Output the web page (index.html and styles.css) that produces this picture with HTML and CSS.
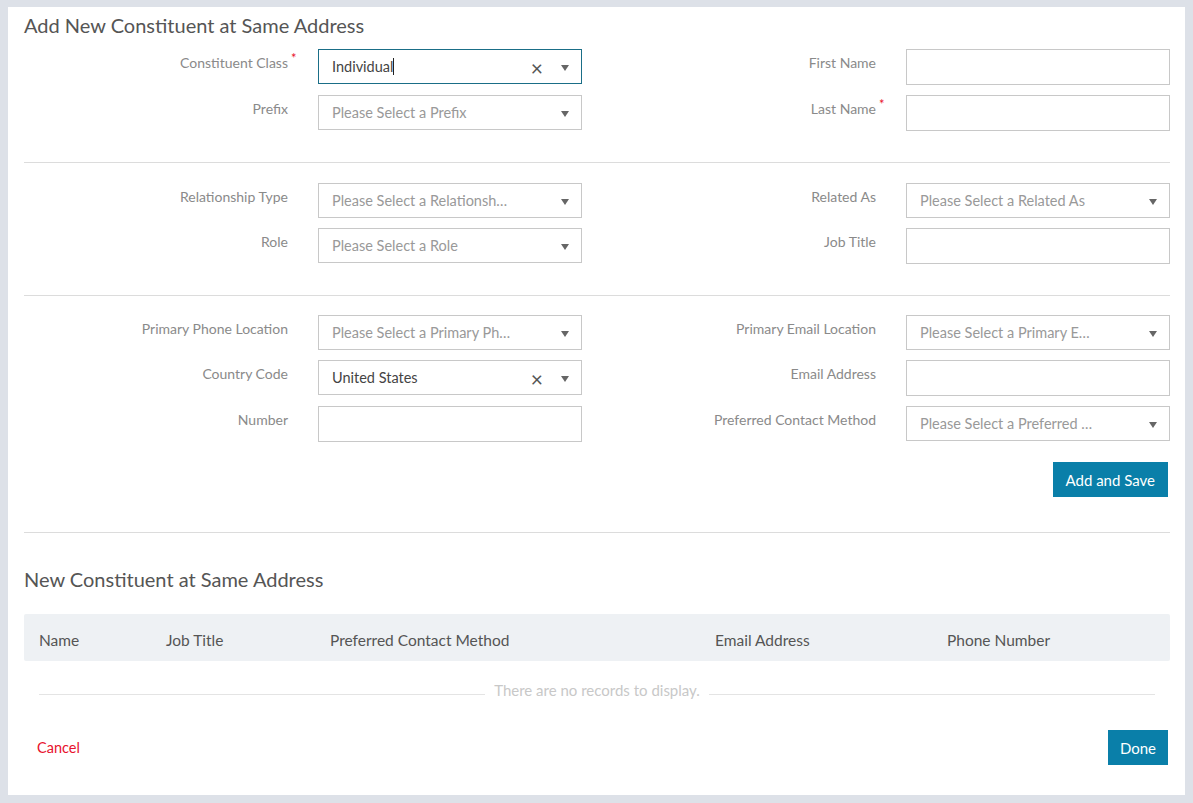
FILE: index.html
```html
<!DOCTYPE html>
<html lang="en">
<head>
    <meta charset="UTF-8">
    <title>Add New Constituent at Same Address</title>
    <link rel="stylesheet" href="styles.css">
</head>
<body>
    <div class="panel">
        <h1 class="panel-title">Add New Constituent at Same Address</h1>

        <div class="form-section">
            <label class="field-label"><span class="label-text">Constituent Class<span class="req">*</span></span></label>
            <div class="select focused">
                <span class="select-value">Individual<span class="caret"></span></span>
                <span class="clear">&times;</span>
                <span class="arrow"></span>
            </div>
            <label class="field-label"><span class="label-text">First Name</span></label>
            <div class="text-input"></div>

            <label class="field-label"><span class="label-text">Prefix</span></label>
            <div class="select">
                <span class="select-placeholder">Please Select a Prefix</span>
                <span class="arrow"></span>
            </div>
            <label class="field-label"><span class="label-text">Last Name<span class="req">*</span></span></label>
            <div class="text-input"></div>
        </div>

        <div class="form-section">
            <label class="field-label"><span class="label-text">Relationship Type</span></label>
            <div class="select">
                <span class="select-placeholder">Please Select a Relationsh…</span>
                <span class="arrow"></span>
            </div>
            <label class="field-label"><span class="label-text">Related As</span></label>
            <div class="select">
                <span class="select-placeholder">Please Select a Related As</span>
                <span class="arrow"></span>
            </div>

            <label class="field-label"><span class="label-text">Role</span></label>
            <div class="select">
                <span class="select-placeholder">Please Select a Role</span>
                <span class="arrow"></span>
            </div>
            <label class="field-label"><span class="label-text">Job Title</span></label>
            <div class="text-input"></div>
        </div>

        <div class="form-section last">
            <label class="field-label"><span class="label-text">Primary Phone Location</span></label>
            <div class="select">
                <span class="select-placeholder">Please Select a Primary Ph…</span>
                <span class="arrow"></span>
            </div>
            <label class="field-label"><span class="label-text">Primary Email Location</span></label>
            <div class="select">
                <span class="select-placeholder">Please Select a Primary E…</span>
                <span class="arrow"></span>
            </div>

            <label class="field-label"><span class="label-text">Country Code</span></label>
            <div class="select">
                <span class="select-value">United States</span>
                <span class="clear">&times;</span>
                <span class="arrow"></span>
            </div>
            <label class="field-label"><span class="label-text">Email Address</span></label>
            <div class="text-input"></div>

            <label class="field-label"><span class="label-text">Number</span></label>
            <div class="text-input"></div>
            <label class="field-label"><span class="label-text">Preferred Contact Method</span></label>
            <div class="select">
                <span class="select-placeholder">Please Select a Preferred …</span>
                <span class="arrow"></span>
            </div>
        </div>

        <div class="save-row">
            <button class="btn-primary">Add and Save</button>
        </div>

        <h2 class="section-title">New Constituent at Same Address</h2>

        <div class="records">
            <div class="records-head">
                <span class="col col-name">Name</span>
                <span class="col col-job">Job Title</span>
                <span class="col col-contact">Preferred Contact Method</span>
                <span class="col col-email">Email Address</span>
                <span class="col col-phone">Phone Number</span>
            </div>
            <div class="records-empty">
                <span class="empty-line"></span>
                <span class="empty-text">There are no records to display.</span>
                <span class="empty-line"></span>
            </div>
        </div>

        <div class="footer-row">
            <a class="cancel-link">Cancel</a>
            <button class="btn-primary btn-done">Done</button>
        </div>
    </div>
</body>
</html>
```

FILE: styles.css
```css
body {
    margin: 0;
    padding: 7px 8px 8px 8px;
    background: #dde1e8;
    font-family: Lato, "Open Sans", sans-serif;
    color: #555;
}
.panel {
    box-sizing: border-box;
    height: 788px;
    background: #fff;
    padding: 8px 15px 0 16px;
}
.panel-title {
    margin: 0;
    font-size: 20px;
    font-weight: 400;
    line-height: 20px;
    color: #555;
}
.form-section {
    display: grid;
    grid-template-columns: repeat(4, minmax(0, 1fr));
    column-gap: 30px;
    row-gap: 10px;
    padding: 14px 0 31px 0;
    border-bottom: 1px solid #dcdcdc;
}
.form-section + .form-section {
    padding-top: 20px;
}
.form-section.last {
    border-bottom: none;
    padding-top: 19px;
    padding-bottom: 0;
}
.field-label {
    text-align: right;
    font-size: 14px;
    color: #8a8a8a;
    padding-top: 5px;
    line-height: 17px;
}
.label-text {
    position: relative;
}
.req {
    position: absolute;
    left: 100%;
    top: -4px;
    margin-left: 3px;
    color: #e8112d;
    font-size: 13px;
}
.select,
.text-input {
    box-sizing: border-box;
    height: 35px;
    border: 1px solid #c8c8c8;
    background: #fff;
    display: flex;
    align-items: center;
    padding: 0 12px 0 13px;
    font-size: 14.5px;
}
.text-input {
    height: 36px;
}
.select.focused {
    border-color: #1a6e87;
}
.select-placeholder,
.select-value {
    flex: 1;
    min-width: 0;
    white-space: nowrap;
    overflow: hidden;
    color: #999;
    padding-right: 10px;
}
.select-value {
    color: #444;
}
.caret {
    display: inline-block;
    width: 1px;
    height: 17px;
    background: #222;
    vertical-align: -3px;
}
.clear {
    color: #555;
    font-size: 21px;
    line-height: 1;
    margin-right: 18px;
    margin-top: 1px;
}
.arrow {
    width: 0;
    height: 0;
    border-left: 4px solid transparent;
    border-right: 4px solid transparent;
    border-top: 6px solid #666;
    margin-top: 2px;
}
.save-row {
    display: flex;
    justify-content: flex-end;
    padding: 20px 2px 35px 0;
    border-bottom: 1px solid #dcdcdc;
}
.btn-primary {
    background: #0a7fa9;
    color: #fff;
    border: none;
    height: 35px;
    padding: 0 13px;
    font-family: inherit;
    font-size: 15px;
}
.btn-done {
    padding: 0 12px;
}
.section-title {
    margin: 36px 0 0 0;
    font-size: 20px;
    font-weight: 400;
    line-height: 20px;
    color: #555;
}
.records {
    margin-top: 25px;
}
.records-head {
    display: flex;
    align-items: center;
    box-sizing: border-box;
    height: 47px;
    padding-top: 4px;
    background: #eef1f4;
    border-radius: 2px;
    font-size: 15.5px;
    color: #555;
}
.col-name { width: 127px; padding-left: 15px; flex: none; }
.col-job { width: 164px; flex: none; }
.col-contact { width: 385px; flex: none; }
.col-email { width: 232px; flex: none; }
.records-empty {
    display: flex;
    align-items: center;
    gap: 9px;
    padding: 20px 15px 0 15px;
}
.empty-line {
    flex: 1;
    height: 1px;
    background: #e4e4e4;
    margin-top: 8px;
}
.empty-text {
    font-size: 15px;
    color: #c8c8c8;
}
.footer-row {
    display: flex;
    justify-content: space-between;
    align-items: center;
    margin-top: 31px;
    padding-right: 2px;
}
.cancel-link {
    color: #e8112d;
    font-size: 14.5px;
    padding-left: 13px;
    cursor: pointer;
}
```
